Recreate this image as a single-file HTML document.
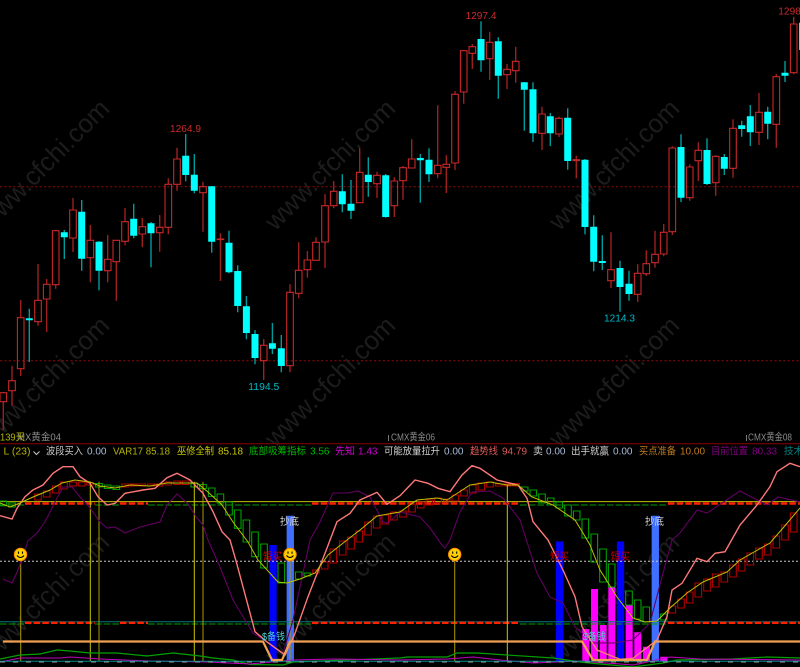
<!DOCTYPE html>
<html><head><meta charset="utf-8"><style>
html,body{margin:0;padding:0;background:#000;width:800px;height:667px;overflow:hidden}
svg{display:block}
text{font-family:"Liberation Sans","Noto Sans CJK SC",sans-serif;font-size:10px}
.wm{font-size:26px;fill:#1c1c1c}
</style></head><body>
<svg width="800" height="667" viewBox="0 0 800 667" xmlns="http://www.w3.org/2000/svg">
<rect width="800" height="667" fill="#000"/>
<!-- watermarks -->
<text class="wm" transform="translate(111,110) rotate(-45)" text-anchor="end">www.cfchi.com</text>
<text class="wm" transform="translate(397,110) rotate(-45)" text-anchor="end">www.cfchi.com</text>
<text class="wm" transform="translate(681,110) rotate(-45)" text-anchor="end">www.cfchi.com</text>
<text class="wm" transform="translate(111,327) rotate(-45)" text-anchor="end">www.cfchi.com</text>
<text class="wm" transform="translate(397,327) rotate(-45)" text-anchor="end">www.cfchi.com</text>
<text class="wm" transform="translate(681,327) rotate(-45)" text-anchor="end">www.cfchi.com</text>
<text class="wm" transform="translate(111,544) rotate(-45)" text-anchor="end">www.cfchi.com</text>
<text class="wm" transform="translate(397,544) rotate(-45)" text-anchor="end">www.cfchi.com</text>
<text class="wm" transform="translate(681,544) rotate(-45)" text-anchor="end">www.cfchi.com</text>
<!-- dotted levels -->
<path d="M0 186.7H800M0 360.7H800" stroke="#8a0a0a" stroke-width="1" stroke-dasharray="2.2 2.2" fill="none"/>
<!-- red wicks -->
<path fill="none" stroke="#9c2020" stroke-width="1.4" d="M3.3 392V392.7M3.3 401.7V430M12 365.7V380.7M12 390.7V406M20.7 300V317.7M20.7 368.7V376M38 264V300.3M38 321.7V325.7M46.7 279V284.3M46.7 299V332M55.7 230V230.7M55.7 284.7V288.7M73 198V210M73 238V252M90.3 225V240.3M90.3 257.7V282.3M107.7 235V259.3M107.7 270.7V282.3M116.3 240V240.3M116.3 261.7V300.7M125 208V221.7M125 241.3V245.3M142.3 218V226.7M142.3 234V247.3M159.7 215V227.3M159.7 232.7V251.7M168.3 178.3V184.3M168.3 227.3V234.3M177 147.7V159M177 184.3V190.7M203 181.7V186.7M203 192.7V231.7M220.4 233.3V281M263.7 339V345.3M263.7 360.7V380M290 284.3V292.3M290 365.7V372.3M298.7 242.3V270.3M298.7 293.3V298.3M307.4 251V260M307.4 269.7V277.7M316 237.3V242.3M325 194V205.7M325 242V268M333.7 181V191.3M333.7 205.7V208.3M359.7 147.7V172.3M377 171.7V175.3M377 183.7V198M394.3 177.3V181M394.3 205.7V217M403 166V167.7M403 180.7V199.7M411.7 139.3V159M437.7 105.3V165.3M437.7 173.7V178.3M446.3 155.3V164.3M446.3 167.3V193M455 91V94.3M455 163V170M463.7 92V103.7M472.3 44V46.7M472.3 53.3V69M489.7 31.7V42.3M489.7 58.7V80M507 64V69.3M507 74.7V89M515.7 46.7V61.3M515.7 70.7V82.7M542 106.7V114M542 133.3V150M559 116.7V118.3M559 134V137M576.3 155.7V178.3M611 232.3V269.7M611 280.7V288M637.7 264.3V273.3M637.7 294.3V302M646.3 250.3V263.7M646.3 273.7V276M655 230.7V254.3M655 262.7V267.7M663.7 224V232.3M663.7 254V256.3M672.3 146.3V148M672.3 231.7V235M689.7 164.3V167M689.7 197.7V200.7M698.3 142.3V150.3M698.3 160.7V181M715.7 155.3V156.3M715.7 182.7V195.7M733 119.3V128.3M733 168.3V177.7M759 93V112.3M759 132.3V145M776.3 74V76.7M776.3 124.3V147.7M793.7 16.7V24M793.7 72.7V74.3"/>
<!-- red bodies -->
<path fill="none" stroke="#c82828" stroke-width="1.1" d="M3.3 392.7m-3.3 0h6.6V401.7h-6.6zM12 380.7m-3.3 0h6.6V390.7h-6.6zM20.7 317.7m-3.3 0h6.6V368.7h-6.6zM38 300.3m-3.3 0h6.6V321.7h-6.6zM46.7 284.3m-3.3 0h6.6V299h-6.6zM55.7 230.7m-3.3 0h6.6V284.7h-6.6zM73 210m-3.3 0h6.6V238h-6.6zM90.3 240.3m-3.3 0h6.6V257.7h-6.6zM107.7 259.3m-3.3 0h6.6V270.7h-6.6zM116.3 240.3m-3.3 0h6.6V261.7h-6.6zM125 221.7m-3.3 0h6.6V241.3h-6.6zM142.3 226.7m-3.3 0h6.6V234h-6.6zM159.7 227.3m-3.3 0h6.6V232.7h-6.6zM168.3 184.3m-3.3 0h6.6V227.3h-6.6zM177 159m-3.3 0h6.6V184.3h-6.6zM203 186.7m-3.3 0h6.6V192.7h-6.6zM220.4 239m-3.3 0h6.6V239.6h-6.6zM263.7 345.3m-3.3 0h6.6V360.7h-6.6zM290 292.3m-3.3 0h6.6V365.7h-6.6zM298.7 270.3m-3.3 0h6.6V293.3h-6.6zM307.4 260m-3.3 0h6.6V269.7h-6.6zM316 242.3m-3.3 0h6.6V260.3h-6.6zM325 205.7m-3.3 0h6.6V242h-6.6zM333.7 191.3m-3.3 0h6.6V205.7h-6.6zM359.7 172.3m-3.3 0h6.6V202.7h-6.6zM377 175.3m-3.3 0h6.6V183.7h-6.6zM394.3 181m-3.3 0h6.6V205.7h-6.6zM403 167.7m-3.3 0h6.6V180.7h-6.6zM411.7 159m-3.3 0h6.6V168h-6.6zM437.7 165.3m-3.3 0h6.6V173.7h-6.6zM446.3 164.3m-3.3 0h6.6V167.3h-6.6zM455 94.3m-3.3 0h6.6V163h-6.6zM463.7 50.7m-3.3 0h6.6V92h-6.6zM472.3 46.7m-3.3 0h6.6V53.3h-6.6zM489.7 42.3m-3.3 0h6.6V58.7h-6.6zM507 69.3m-3.3 0h6.6V74.7h-6.6zM515.7 61.3m-3.3 0h6.6V70.7h-6.6zM542 114m-3.3 0h6.6V133.3h-6.6zM559 118.3m-3.3 0h6.6V134h-6.6zM576.3 159.7m-3.3 0h6.6V160.6h-6.6zM611 269.7m-3.3 0h6.6V280.7h-6.6zM637.7 273.3m-3.3 0h6.6V294.3h-6.6zM646.3 263.7m-3.3 0h6.6V273.7h-6.6zM655 254.3m-3.3 0h6.6V262.7h-6.6zM663.7 232.3m-3.3 0h6.6V254h-6.6zM672.3 148m-3.3 0h6.6V231.7h-6.6zM689.7 167m-3.3 0h6.6V197.7h-6.6zM698.3 150.3m-3.3 0h6.6V160.7h-6.6zM715.7 156.3m-3.3 0h6.6V182.7h-6.6zM733 128.3m-3.3 0h6.6V168.3h-6.6zM759 112.3m-3.3 0h6.6V132.3h-6.6zM776.3 76.7m-3.3 0h6.6V124.3h-6.6zM793.7 24m-3.3 0h6.6V72.7h-6.6z"/>
<!-- cyan wicks -->
<path fill="none" stroke="#009c9c" stroke-width="1.4" d="M29.3 308.7V362M64.3 230V259M81.7 200V270.7M99 241V290.3M133.7 203.7V238.3M151 222V267.3M185.7 134V181.3M194.3 154V193.3M211.7 186V252.7M229 230.7V273.3M237.7 265.3V312.3M246.4 296V339.3M255 330V364.3M272.4 323V354M281.3 335V372.3M342.3 174.3V212.3M351 180V219M368.3 157.3V196.7M385.7 174V217.7M420.3 154V202.7M429 148.3V182M481 21.3V71.7M498.3 37.3V98.7M524.3 82V130.7M533 82.3V142M550.3 113V146M567.7 108.3V169.7M585 159V234.3M593.7 215.3V271.3M602.3 235.3V270M620 260.7V311.7M629 270.7V300.7M681 134.3V202M707 138.3V185M724.3 154V175M741.7 120.7V136.7M750.3 105V146M767.7 106.7V139.3M785 61V82"/>
<!-- cyan bodies -->
<path fill="none" stroke="#00ffff" stroke-width="7" d="M29.3 318.3V320.3M64.3 232.3V237.3M81.7 211.7V258.7M99 241.7V270.7M133.7 218.7V235.7M151 223.3V233.3M185.7 155.7V175M194.3 174.7V190.7M211.7 186.3V241.7M229 242.7V272.3M237.7 271V306M246.4 306.3V333M255 334V358M272.4 343.3V348.7M281.3 348.3V366M342.3 191.3V204.3M351 203.7V210.7M368.3 174.7V182M385.7 175.3V217M420.3 158V160.3M429 159.7V174.3M481 39V60.3M498.3 41.3V75.7M524.3 82.3V89.7M533 89.3V133.3M550.3 116.3V133.3M567.7 117.7V161M585 159.7V227M593.7 226.7V261.7M602.3 261V263M620 268V287M629 283.7V294M681 147V197.7M707 150V184M724.3 157V168.7M741.7 125.3V129M750.3 116.3V132.3M767.7 111.7V123.7M785 72.7V75.7M802.5 22.7V50"/>
<!-- price labels -->
<text x="170" y="132" fill="#c92a2a" textLength="31" lengthAdjust="spacingAndGlyphs" font-size="11">1264.9</text>
<text x="465.5" y="19" fill="#c92a2a" textLength="31" lengthAdjust="spacingAndGlyphs">1297.4</text>
<text x="778.3" y="14.3" fill="#c92a2a" textLength="31" lengthAdjust="spacingAndGlyphs">1298.6</text>
<text x="248.3" y="390" fill="#00b8c8" textLength="31" lengthAdjust="spacingAndGlyphs">1194.5</text>
<text x="604" y="321.7" fill="#00b8c8" textLength="31" lengthAdjust="spacingAndGlyphs">1214.3</text>
<!-- axis labels -->
<text x="17" y="440.5" fill="#8a8a8a" textLength="44" lengthAdjust="spacingAndGlyphs">MX黄金04</text>
<text x="0" y="440.5" fill="#b4b400" textLength="25" lengthAdjust="spacingAndGlyphs">139天</text>
<text x="391" y="440.5" fill="#8a8a8a" textLength="44" lengthAdjust="spacingAndGlyphs">CMX黄金06</text>
<text x="748" y="440.5" fill="#8a8a8a" textLength="44" lengthAdjust="spacingAndGlyphs">CMX黄金08</text>
<path d="M388.5 435V441M746.5 435V441" stroke="#777" stroke-width="1"/>
<path d="M0 443.7H800" stroke="#7a0000" stroke-width="1.2"/>
<!-- header text -->
<text x="3.5" y="454.5" fill="#b4b400" textLength="27" lengthAdjust="spacingAndGlyphs">L (23)</text>
<path d="M33.5 451.5l3 3 3-3" stroke="#c8c8c8" fill="none" stroke-width="1"/>
<text x="46" y="454.5" fill="#c8c8c8" textLength="37" lengthAdjust="spacingAndGlyphs">波段买入</text>
<text x="87" y="454.5" fill="#a8bcd8" textLength="19.5" lengthAdjust="spacingAndGlyphs">0.00</text>
<text x="113" y="454.5" fill="#b4b400" textLength="57" lengthAdjust="spacingAndGlyphs">VAR17 85.18</text>
<text x="177" y="454.5" fill="#c8c800" textLength="37" lengthAdjust="spacingAndGlyphs">巫修全制</text>
<text x="218" y="454.5" fill="#c8c800" textLength="25" lengthAdjust="spacingAndGlyphs">85.18</text>
<text x="249" y="454.5" fill="#00b800" textLength="57" lengthAdjust="spacingAndGlyphs">底部吸筹指标</text>
<text x="310" y="454.5" fill="#00b800" textLength="19.5" lengthAdjust="spacingAndGlyphs">3.56</text>
<text x="335" y="454.5" fill="#d000d0" textLength="20" lengthAdjust="spacingAndGlyphs">先知</text>
<text x="358" y="454.5" fill="#d000d0" textLength="19.5" lengthAdjust="spacingAndGlyphs">1.43</text>
<text x="384" y="454.5" fill="#d0d0d0" textLength="56" lengthAdjust="spacingAndGlyphs">可能放量拉升</text>
<text x="444" y="454.5" fill="#a8bcd8" textLength="19.5" lengthAdjust="spacingAndGlyphs">0.00</text>
<text x="470" y="454.5" fill="#e05a5a" textLength="28" lengthAdjust="spacingAndGlyphs">趋势线</text>
<text x="502" y="454.5" fill="#e05a5a" textLength="25" lengthAdjust="spacingAndGlyphs">94.79</text>
<text x="533" y="454.5" fill="#d0d0d0" textLength="10" lengthAdjust="spacingAndGlyphs">卖</text>
<text x="546" y="454.5" fill="#a8bcd8" textLength="19.5" lengthAdjust="spacingAndGlyphs">0.00</text>
<text x="571" y="454.5" fill="#d0d0d0" textLength="38" lengthAdjust="spacingAndGlyphs">出手就赢</text>
<text x="613" y="454.5" fill="#a8bcd8" textLength="19.5" lengthAdjust="spacingAndGlyphs">0.00</text>
<text x="639" y="454.5" fill="#c07c20" textLength="37" lengthAdjust="spacingAndGlyphs">买点准备</text>
<text x="680" y="454.5" fill="#c07c20" textLength="25" lengthAdjust="spacingAndGlyphs">10.00</text>
<text x="711" y="454.5" fill="#800080" textLength="37" lengthAdjust="spacingAndGlyphs">目前位置</text>
<text x="752" y="454.5" fill="#800080" textLength="25" lengthAdjust="spacingAndGlyphs">80.33</text>
<text x="784" y="454.5" fill="#008080" textLength="19" lengthAdjust="spacingAndGlyphs">技术</text>
<!-- bars -->
<path fill="none" stroke="#0000ff" stroke-width="7.3" d="M273 545V661M559.7 541.5V661M620.5 541.5V661"/>
<path fill="none" stroke="#ff00ff" stroke-width="7" d="M585.8 629V661M594.5 589V661M603.2 625V661M611.8 587.3V661M629.2 605V661M637.8 632.3V661M646.5 646.7V661M663.8 656.7V661"/>
<path fill="none" stroke="#3f6fff" stroke-width="7.3" d="M290.3 515.7V661M655.3 515.7V661"/>
<!-- horizontal levels -->
<path d="M0 621.8H800" stroke="#007a7a" stroke-width="1"/>
<path d="M0 561.3H800" stroke="#c8c8c8" stroke-width="1" stroke-dasharray="2 2"/>
<path d="M0 501.6H800" stroke="#c0c000" stroke-width="1"/>
<path fill="none" stroke="#00a000" stroke-width="1" stroke-dasharray="6.7 2" d="M0 505H25M95 505H120M148 505H312M520 505H668M0 624H25M95 624H120M148 624H312M520 624H668"/>
<path fill="none" stroke="#ff2000" stroke-width="2.4" stroke-dasharray="6.5 2.17" d="M25 503.5H95M120 503.5H148M312 503.5H520M668 503.5H800M25 622.8H95M120 622.8H148M312 622.8H520M668 622.8H800"/>
<!-- green stairs -->
<path fill="none" stroke="#00a000" stroke-width="1.1" d="M3.3 501m-3.3 0h6.6V505.7h-6.6zM12 503m-3.3 0h6.6V507h-6.6zM99 483.5m-3.3 0h6.6V487h-6.6zM107.7 485m-3.3 0h6.6V488.5h-6.6zM116.3 486m-3.3 0h6.6V489.5h-6.6zM194.3 483.5m-3.3 0h6.6V487h-6.6zM203 484.5m-3.3 0h6.6V488.5h-6.6zM211.7 488m-3.3 0h6.6V496.5h-6.6zM220.4 494m-3.3 0h6.6V503h-6.6zM229 502m-3.3 0h6.6V515h-6.6zM237.7 510m-3.3 0h6.6V528.3h-6.6zM246.4 520m-3.3 0h6.6V542h-6.6zM255 532m-3.3 0h6.6V556.7h-6.6zM264 544m-3.3 0h6.6V568h-6.6zM281.3 563m-3.3 0h6.6V583h-6.6zM298.7 572m-3.3 0h6.6V579h-6.6zM307.4 573m-3.3 0h6.6V576h-6.6zM524.7 487m-3.3 0h6.6V491h-6.6zM533.3 490m-3.3 0h6.6V496h-6.6zM542 494m-3.3 0h6.6V503h-6.6zM550.7 498m-3.3 0h6.6V505h-6.6zM559.3 502m-3.3 0h6.6V508h-6.6zM568 505m-3.3 0h6.6V516h-6.6zM576.7 511m-3.3 0h6.6V520h-6.6zM585.3 519m-3.3 0h6.6V538h-6.6zM594.3 534m-3.3 0h6.6V562h-6.6zM603 549m-3.3 0h6.6V582h-6.6zM611.7 564m-3.3 0h6.6V587h-6.6zM629 591m-3.3 0h6.6V605h-6.6zM637.7 600m-3.3 0h6.6V619h-6.6zM646.3 607m-3.3 0h6.6V622h-6.6zM663.7 614m-3.3 0h6.6V620h-6.6z"/>
<!-- red stairs -->
<path fill="none" stroke="#b00000" stroke-width="1.1" d="M38 494m-3.3 0h6.6V500h-6.6zM46.7 491m-3.3 0h6.6V497h-6.6zM55.7 486m-3.3 0h6.6V493h-6.6zM64 482m-3.3 0h6.6V489h-6.6zM73 482m-3.3 0h6.6V486h-6.6zM81.7 482m-3.3 0h6.6V486h-6.6zM90 482.5m-3.3 0h6.6V485h-6.6zM125 484m-3.3 0h6.6V487h-6.6zM133.7 484m-3.3 0h6.6V486h-6.6zM142.3 484m-3.3 0h6.6V486h-6.6zM151 484m-3.3 0h6.6V486h-6.6zM159.7 484m-3.3 0h6.6V486h-6.6zM168.3 482m-3.3 0h6.6V485h-6.6zM177 481m-3.3 0h6.6V484.5h-6.6zM185.7 481m-3.3 0h6.6V484.5h-6.6zM316 570m-3.3 0h6.6V573h-6.6zM324.7 562m-3.3 0h6.6V569h-6.6zM333.3 549m-3.3 0h6.6V563h-6.6zM342.7 541m-3.3 0h6.6V555h-6.6zM351 537m-3.3 0h6.6V549h-6.6zM359.3 531m-3.3 0h6.6V542h-6.6zM368 522m-3.3 0h6.6V535h-6.6zM376.7 516m-3.3 0h6.6V528h-6.6zM385.3 515m-3.3 0h6.6V524h-6.6zM394 512m-3.3 0h6.6V520h-6.6zM403 511m-3.3 0h6.6V517h-6.6zM412 504m-3.3 0h6.6V512h-6.6zM420.7 502m-3.3 0h6.6V508h-6.6zM429.3 500m-3.3 0h6.6V505h-6.6zM438 498m-3.3 0h6.6V503h-6.6zM446.7 499m-3.3 0h6.6V501h-6.6zM455.3 495m-3.3 0h6.6V501h-6.6zM464 490m-3.3 0h6.6V496h-6.6zM472.7 485m-3.3 0h6.6V493h-6.6zM481.3 483m-3.3 0h6.6V490h-6.6zM490 482m-3.3 0h6.6V487h-6.6zM498.7 484m-3.3 0h6.6V486h-6.6zM507.3 484m-3.3 0h6.6V486h-6.6zM516 483.5m-3.3 0h6.6V486h-6.6zM672.3 606m-3.3 0h6.6V613h-6.6zM681 599m-3.3 0h6.6V608h-6.6zM689.7 592m-3.3 0h6.6V603h-6.6zM698.3 583m-3.3 0h6.6V597h-6.6zM707 579m-3.3 0h6.6V591h-6.6zM715.7 574m-3.3 0h6.6V587h-6.6zM724.3 572m-3.3 0h6.6V582h-6.6zM733 565m-3.3 0h6.6V577h-6.6zM741.7 559m-3.3 0h6.6V571h-6.6zM750.3 553m-3.3 0h6.6V565h-6.6zM759 548m-3.3 0h6.6V559h-6.6zM767.7 544m-3.3 0h6.6V555h-6.6zM776.3 536m-3.3 0h6.6V548h-6.6zM785 525m-3.3 0h6.6V540h-6.6zM793.7 513m-3.3 0h6.6V532h-6.6z"/>
<!-- verticals -->
<path fill="none" stroke="#c8c800" stroke-width="1" d="M90.3 481.7V661M194.3 481.7V661M507.3 485V661"/>
<path fill="none" stroke="#a89a00" stroke-width="1" d="M99 481.7V661M203 481.7V661"/>
<path fill="none" stroke="#a09000" stroke-width="1.1" d="M20.7 554V661M290 554V661M454.7 554V661"/>
<!-- bottom curves -->
<polyline fill="none" stroke="#00a000" stroke-width="1.2" points="0,659 20,655 40,654 57,650 70,651 90,653 117,653 147,656 173,653 200,656 213,658 233,660 250,664.5 283,665 293,662 400,658 407,657 447,657 457,653 477,653 507,655 553,658 580,662 600,664 633,667 663,663 677,660 733,659 767,657 800,658"/>
<polyline fill="none" stroke="#c000c0" stroke-width="1" points="0,662 20,658 60,658 70,657 100,659 150,661 207,662 250,664 293,660 333,659 400,660 447,659 473,657 500,660 533,663 580,661 633,665 670,657 700,659 800,660"/>
<path d="M0 661.3H800" stroke="#008a8a" stroke-width="1"/>
<path d="M0 662H800" stroke="#999" stroke-width="1" stroke-dasharray="5 8"/>
<!-- purple curve -->
<polyline fill="none" stroke="#620062" stroke-width="1.1" points="3,579 12,583 18,570 28,541 37,533 45,522 55,502 63,487 72,487 80,497 90,508 100,522 107,528 115,527 125,533 140,527 160,522 167,505 177,494 187,503 197,518 203,525 208,540 220,567 233,600 253,633 267,642 283,653 293,620 310,540 320,522 333,493 347,493 358,491 370,497 383,522 388,523 400,512 420,517 430,528 442,545 445,548 450,540 460,512 472,492 490,491 503,498 520,520 528,545 537,573 550,597 563,603 575,627 593,643 613,643 633,640 650,623 663,573 672,540 680,533 697,510 707,513 740,491 757,500 767,505 778,497 800,502"/>
<!-- salmon curve -->
<polyline fill="none" stroke="#ff7878" stroke-width="1.4" points="0,515.7 12,519 17,508.3 25,496.7 33,490 43,485 53,473.3 63,466.7 73,466.7 80,476.7 90,483.3 98,496.7 107,505 115,503.3 125,493.3 143,490 155,488.3 167,477.7 177,473.3 190,480 203,493.3 213,511.7 222,531.7 230,540 236.7,563.3 255,631.7 266.7,641.7 285,655 295,633.3 308,596.7 325,553.3 337,521.7 350,513.3 360,500 377,492.3 387,504.3 400,495.7 415,480 428,483.3 438,488.3 450,491.7 462,475 472,465.7 480,468.3 497,480 518,485 527,498.3 533,521.7 548,540 563,570 575,596.7 582,626.7 597,650 620,659.3 633,658.3 657,640 667,616.7 672,590 682,583.3 697,558.3 707,561.7 715,553.3 725,551.7 740,525 757,505 770,486.7 777,471.7 790,463.3 800,466.7"/>
<!-- yellow curve -->
<polyline fill="none" stroke="#c0c000" stroke-width="1" points="0,503 10,507 20,503 33,497 50,490 62,483 75,480 90,482 100,486 115,488 130,485 150,486 167,483 197,483 208,492 222,505 233,522 248,542 258,560 278,582 287,583 300,579 315,573 328,555 347,540 360,530 377,516 400,512 417,500 437,498 447,500 470,485 490,482 507,485 518,485 532,497 553,505 575,520 583,533 590,545 600,570 617,597 633,618 645,622 657,621 670,608 687,593 703,582 727,572 740,560 770,543 783,528 800,508"/>
<!-- orange -->
<polyline fill="none" stroke="#f0a050" stroke-width="2.2" points="3,641.5 263,641.5 272,660 282,660 290,641.5 582,641.5 593,660 647,660 655,641.5 800,641.5"/>
<!-- smileys -->
<circle cx="20.5" cy="554.5" r="6.2" fill="#ffd000" stroke="#ff8a00" stroke-width="1"/>
<path d="M18.5 551.5v2.2M22.5 551.5v2.2" stroke="#000" stroke-width="1.1"/>
<path d="M17 555.5q3.5 4 7 0" stroke="#000" stroke-width="1" fill="none"/>
<circle cx="290" cy="554.5" r="6.2" fill="#ffd000" stroke="#ff8a00" stroke-width="1"/>
<path d="M288 551.5v2.2M292 551.5v2.2" stroke="#000" stroke-width="1.1"/>
<path d="M286.5 555.5q3.5 4 7 0" stroke="#000" stroke-width="1" fill="none"/>
<circle cx="454.7" cy="554.5" r="6.2" fill="#ffd000" stroke="#ff8a00" stroke-width="1"/>
<path d="M452.7 551.5v2.2M456.7 551.5v2.2" stroke="#000" stroke-width="1.1"/>
<path d="M451.2 555.5q3.5 4 7 0" stroke="#000" stroke-width="1" fill="none"/>
<!-- chart annotations -->
<text x="280" y="525" fill="#d8d8d8" textLength="19" lengthAdjust="spacingAndGlyphs">抄底</text>
<text x="645" y="525" fill="#d8d8d8" textLength="19" lengthAdjust="spacingAndGlyphs">抄底</text>
<text x="263" y="560" fill="#d00000" textLength="19" lengthAdjust="spacingAndGlyphs">短买</text>
<text x="550" y="560" fill="#d00000" textLength="19" lengthAdjust="spacingAndGlyphs">短买</text>
<text x="610.7" y="560" fill="#d00000" textLength="19" lengthAdjust="spacingAndGlyphs">短买</text>
<text x="262" y="640" fill="#50d0d0" textLength="23" lengthAdjust="spacingAndGlyphs">$备钱</text>
<text x="582.7" y="640" fill="#50d0d0" textLength="23" lengthAdjust="spacingAndGlyphs">$备钱</text>
</svg>
</body></html>
